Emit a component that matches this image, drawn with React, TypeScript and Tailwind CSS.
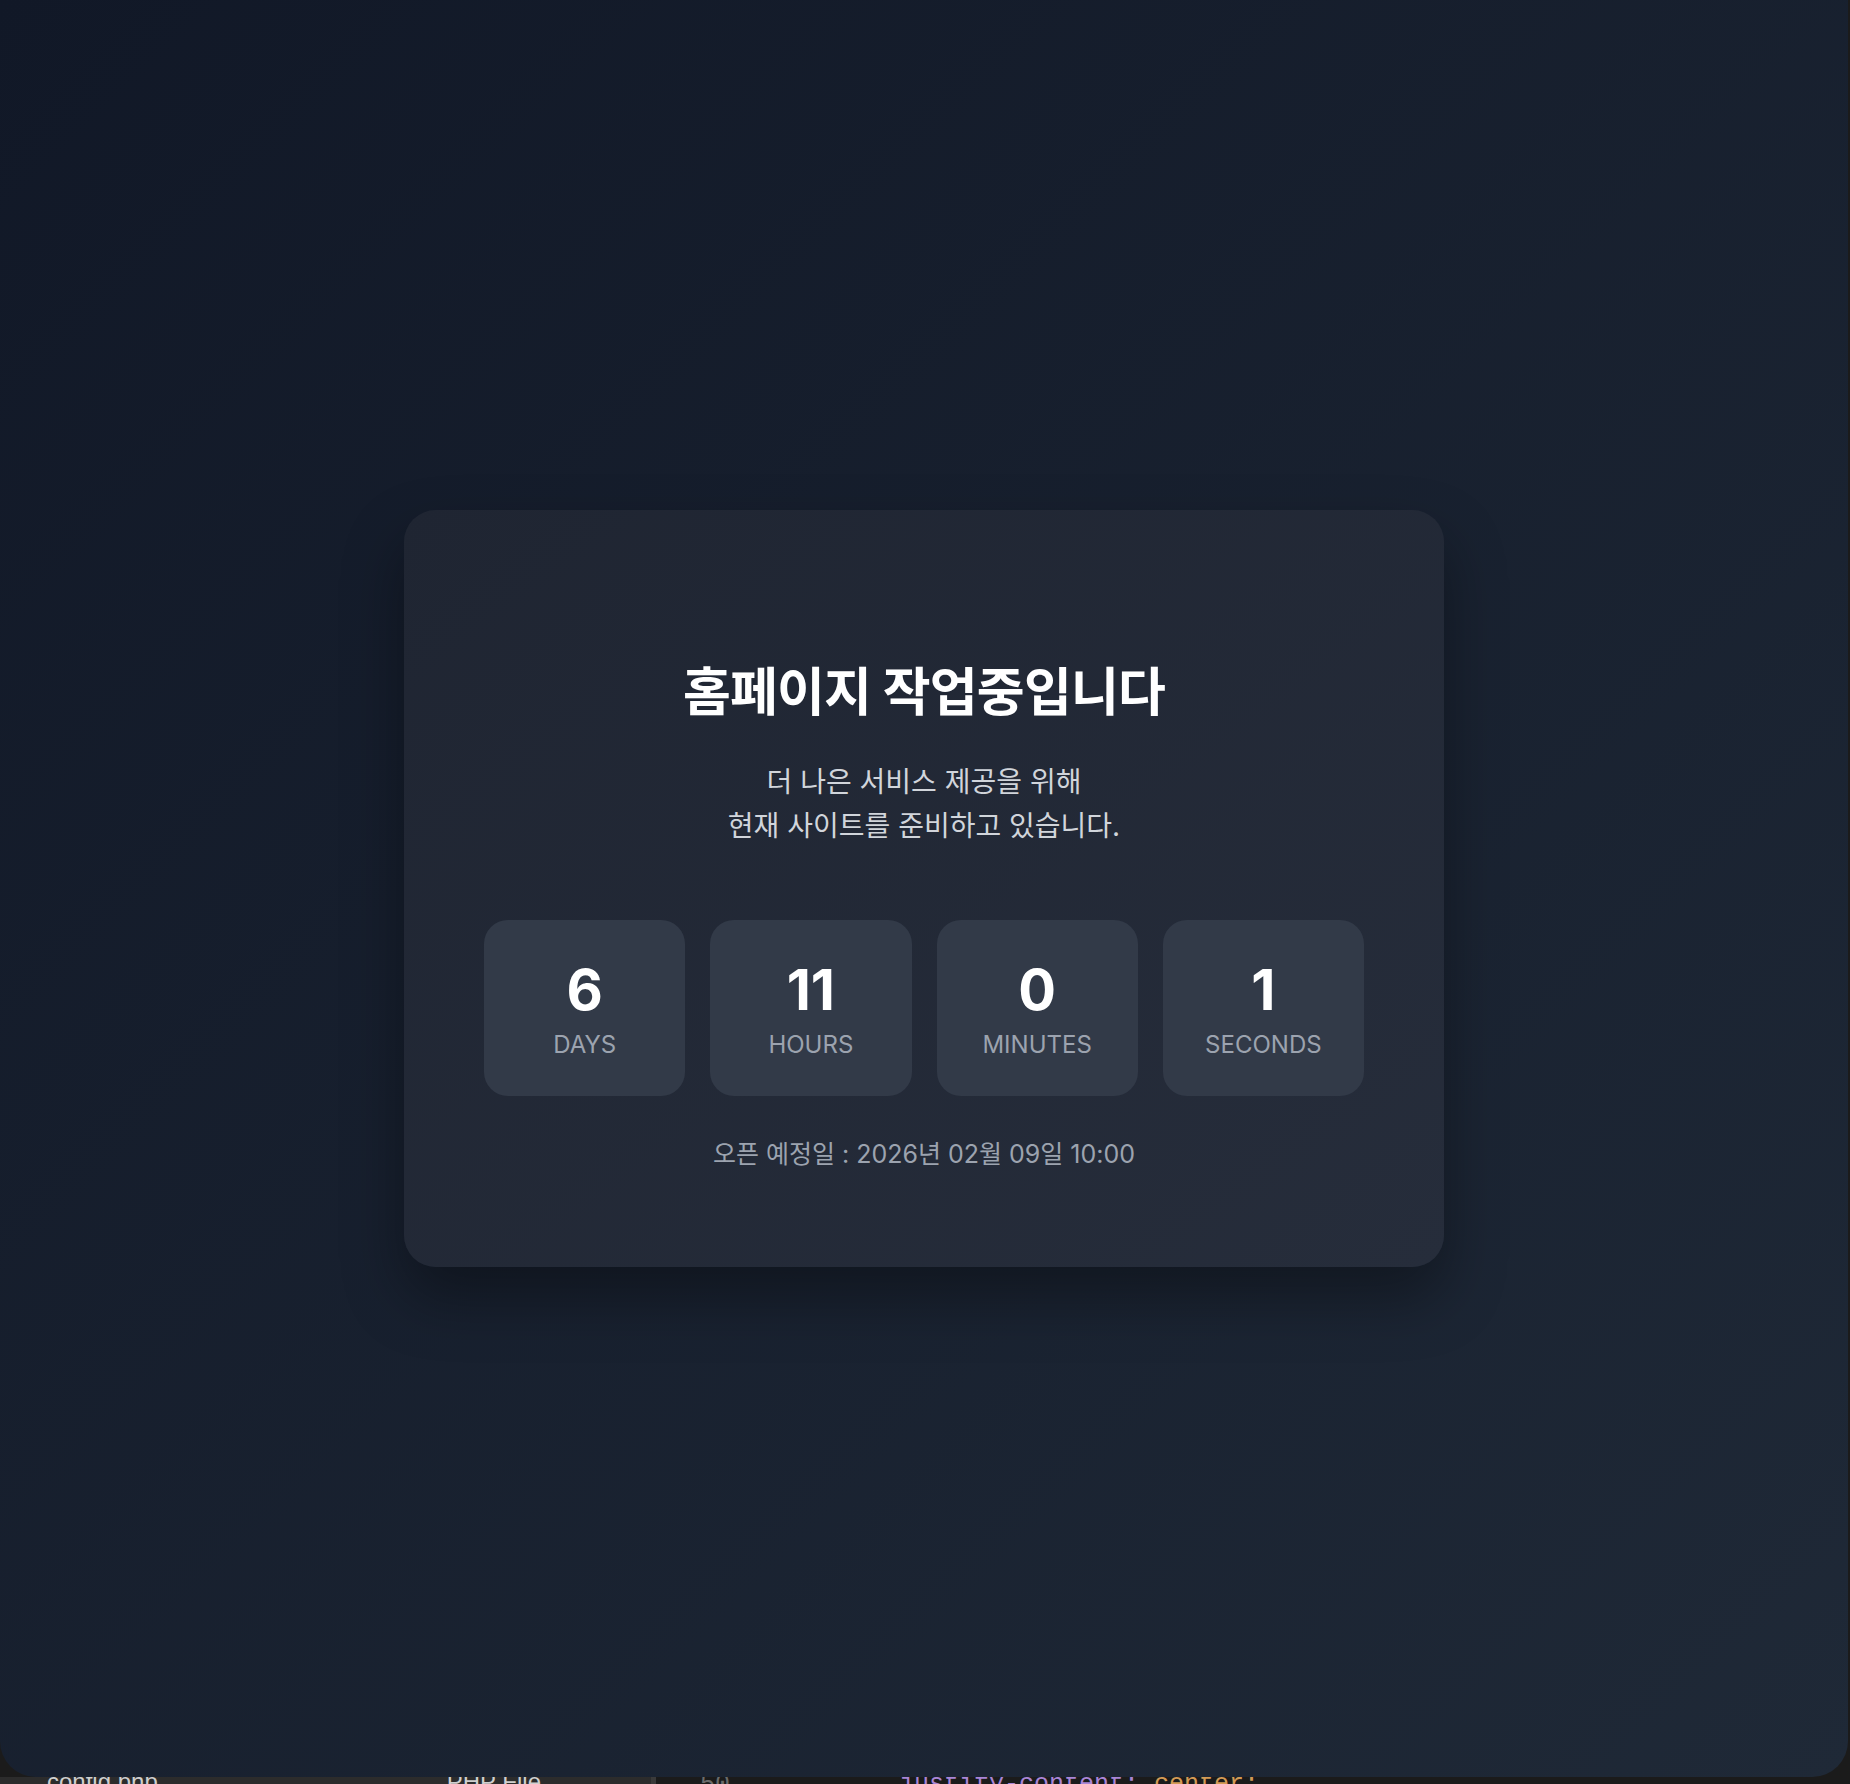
import React from "react";

type Unit = {
  value: number;
  label: string;
};

const units: Unit[] = [
  { value: 6, label: "DAYS" },
  { value: 11, label: "HOURS" },
  { value: 0, label: "MINUTES" },
  { value: 1, label: "SECONDS" },
];

const TimeBox: React.FC<{ unit: Unit }> = ({ unit }) => {
  return (
    <div className="flex flex-col items-center rounded-[24px] bg-[#323a48] pt-[42px] pb-[35px]">
      <span className="text-[56px] leading-none font-bold text-white">{unit.value}</span>
      <span className="mt-[11px] text-[24px] leading-[32px] text-[#9ca3af]">{unit.label}</span>
    </div>
  );
};

// strip of the editor window peeking out under the browser window
const EditorStrip: React.FC = () => {
  return (
    <div className="flex h-[7px] overflow-hidden bg-[#1b1b1b]">
      <div className="flex w-[651px] bg-[#2c2c2c] font-['Liberation_Sans',sans-serif] text-[24px] leading-[24px] text-[#cfcfcf]">
        <span className="ml-[47px] -mt-[7px] whitespace-nowrap">config.php</span>
        <span className="ml-[289px] -mt-[7px] whitespace-nowrap">PHP File</span>
      </div>
      <div className="w-[5px] bg-[#3a3a3a]" />
      <div className="flex font-['Liberation_Mono',monospace] text-[25px] leading-[25px]">
        <span className="ml-[44px] -mt-[5px] text-[#6b6b6b]">50</span>
        <span className="ml-[169px] -mt-[5px] whitespace-nowrap text-[#a985d6]">justify-content:</span>
        <span className="ml-[15px] -mt-[5px] whitespace-nowrap text-[#d39a55]">center;</span>
      </div>
    </div>
  );
};

const App: React.FC = () => {
  return (
    <div className="min-h-[1784px] w-[1850px] bg-[#1b1b1b] font-['Inter','Noto_Sans_CJK_KR',sans-serif]">
      <div className="flex h-[1777px] w-[1848px] items-center justify-center rounded-b-[36px] bg-gradient-to-br from-[#111827] to-[#1f2937]">
        <div className="w-[1040px] rounded-[32px] bg-gradient-to-br from-[#1f2532] to-[#262d3b] px-[80px] pt-[151px] pb-[97px] text-center shadow-[0_30px_60px_rgba(0,0,0,0.35)]">
          <h1 className="text-[52px] leading-[64px] font-bold tracking-[-0.015em] text-white">
            홈페이지 작업중입니다
          </h1>
          <p className="mt-[35px] text-[28px] leading-[44px] text-[#d1d5db]">
            더 나은 서비스 제공을 위해
            <br />
            현재 사이트를 준비하고 있습니다.
          </p>
          <div className="mt-[72px] grid grid-cols-4 gap-[25px]">
            {units.map((unit) => (
              <TimeBox key={unit.label} unit={unit} />
            ))}
          </div>
          <p className="mt-[42px] text-[25px] leading-[32px] text-[#9ca3af]">
            오픈 예정일 : 2026년 02월 09일 10:00
          </p>
        </div>
      </div>
      <EditorStrip />
    </div>
  );
};

export default App;
